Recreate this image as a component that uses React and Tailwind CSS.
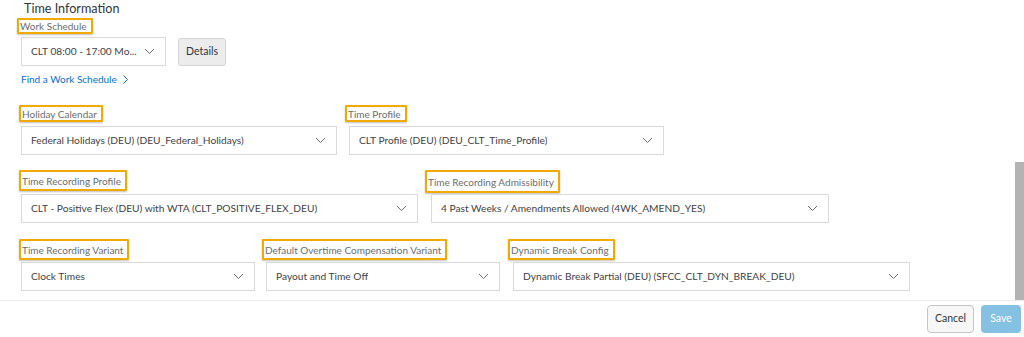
import React from "react";

const Chevron = () => (
  <svg width="11" height="7" viewBox="0 0 11 7" className="shrink-0">
    <polyline points="1,1 5.5,5.5 10,1" fill="none" stroke="#6a6d70" strokeWidth="1" />
  </svg>
);

const Label = ({ text, shift = "-ml-[2px]", h = "h-[17px]" }) => (
  <div className={`${shift} ${h} self-start flex items-center border-2 border-[#f2a900] rounded-[1px] pl-[1px] pr-[4px] shadow-[0_1px_2px_rgba(0,0,0,0.25)] text-[10px] text-[#6a6d70] leading-none`}>
    {text}
  </div>
);

const Select = ({ value, w }) => (
  <div className={`${w} h-[29px] flex items-center justify-between border border-[#d9d9d9] bg-white pl-[9px] pr-[10px] text-[10.2px] text-[#3f4246]`}>
    <span className="truncate">{value}</span>
    <Chevron />
  </div>
);

const Field = ({ label, value, w, shift, h, gap = "mt-[4px]" }) => (
  <div className="flex flex-col">
    <Label text={label} shift={shift} h={h} />
    <div className={gap}>
      <Select value={value} w={w} />
    </div>
  </div>
);

export default function App() {
  return (
    <div className="relative w-[1024px] h-[337px] bg-white overflow-hidden" style={{ fontFamily: 'Lato, "Liberation Sans", sans-serif' }}>
      <div className="h-[300px] pl-[21px]">
        <div className="pl-[3px] pt-[1px] text-[12.6px] leading-[16px] text-[#32363a]">Time Information</div>
        <div className="mt-[1px] flex flex-col">
          <Label text="Work Schedule" shift="-ml-[4px]" h="h-[16px]" />
          <div className="mt-[3px] flex items-center gap-[12px]">
            <Select value="CLT 08:00 - 17:00 Mo..." w="w-[145px]" />
            <div className="w-[48px] h-[28px] flex items-center justify-center rounded-[3px] border border-[#d4d4d4] bg-[#ececec] text-[10.5px] text-[#32363a]">
              Details
            </div>
          </div>
          <div className="mt-[6px] flex items-center gap-[6px] text-[10px] text-[#0a6ed1] leading-[14px]">
            Find a Work Schedule
            <svg width="5" height="9" viewBox="0 0 5 9">
              <polyline points="0.5,0.5 4.5,4.5 0.5,8.5" fill="none" stroke="#0a6ed1" strokeWidth="1" />
            </svg>
          </div>
        </div>

        <div className="mt-[19px] flex gap-[12px]">
          <Field label="Holiday Calendar" value="Federal Holidays (DEU) (DEU_Federal_Holidays)" w="w-[316px]" shift="-ml-[2px]" />
          <Field label="Time Profile" value="CLT Profile (DEU) (DEU_CLT_Time_Profile)" w="w-[315px]" shift="-ml-[4px]" />
        </div>

        <div className="mt-[15px] flex gap-[13px]">
          <Field label="Time Recording Profile" value="CLT - Positive Flex (DEU) with WTA (CLT_POSITIVE_FLEX_DEU)" w="w-[397px]" shift="-ml-[2px]" h="h-[21px]" gap="mt-[3px]" />
          <Field label="Time Recording Admissibility" value="4 Past Weeks / Amendments Allowed (4WK_AMEND_YES)" w="w-[398px]" shift="-ml-[6px]" h="h-[23px]" gap="mt-[1px]" />
        </div>

        <div className="mt-[16px] flex">
          <Field label="Time Recording Variant" value="Clock Times" w="w-[234px]" shift="-ml-[2px]" h="h-[21px]" gap="mt-[2px]" />
          <div className="ml-[11px]">
            <Field label="Default Overtime Compensation Variant" value="Payout and Time Off" w="w-[234px]" shift="-ml-[4px]" h="h-[21px]" gap="mt-[2px]" />
          </div>
          <div className="ml-[13px]">
            <Field label="Dynamic Break Config" value="Dynamic Break Partial (DEU) (SFCC_CLT_DYN_BREAK_DEU)" w="w-[397px]" shift="-ml-[5px]" h="h-[21px]" gap="mt-[2px]" />
          </div>
        </div>
      </div>

      <div className="h-[37px] border-t border-[#ececec] flex items-center justify-end gap-[7px] pr-[3px]">
        <div className="w-[47px] h-[28px] flex items-center justify-center rounded-[4px] border border-[#c6c6c6] bg-[#f7f7f7] text-[10.5px] text-[#32363a]">
          Cancel
        </div>
        <div className="w-[40px] h-[28px] flex items-center justify-center rounded-[4px] bg-[#85c1e3] text-[10.5px] text-white">
          Save
        </div>
      </div>

      <div className="absolute right-0 top-[162px] w-[9px] h-[138px] bg-[#b3b3b3]" />
    </div>
  );
}
